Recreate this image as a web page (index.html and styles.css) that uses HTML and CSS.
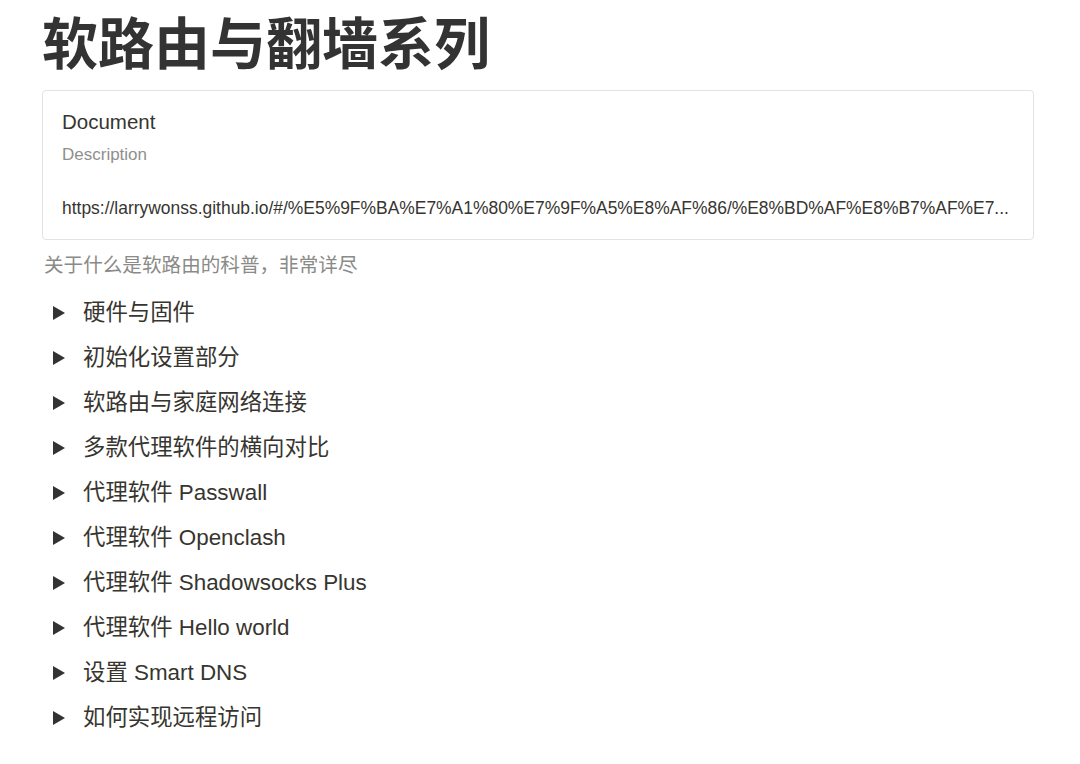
FILE: index.html
```html
<!DOCTYPE html>
<html lang="zh-CN">
<head>
<meta charset="utf-8">
<title>软路由与翻墙系列</title>
<link rel="stylesheet" href="styles.css">
</head>
<body>
<main class="page">
  <h1 class="title">软路由与翻墙系列</h1>
  <div class="bookmark">
    <div class="bm-title">Document</div>
    <div class="bm-desc">Description</div>
    <div class="bm-url">https://larrywonss.github.io/#/%E5%9F%BA%E7%A1%80%E7%9F%A5%E8%AF%86/%E8%BD%AF%E8%B7%AF%E7...</div>
  </div>
  <p class="caption">关于什么是软路由的科普，非常详尽</p>
  <ul class="toggles">
    <li class="toggle"><span class="tri"></span><span class="label">硬件与固件</span></li>
    <li class="toggle"><span class="tri"></span><span class="label">初始化设置部分</span></li>
    <li class="toggle"><span class="tri"></span><span class="label">软路由与家庭网络连接</span></li>
    <li class="toggle"><span class="tri"></span><span class="label">多款代理软件的横向对比</span></li>
    <li class="toggle"><span class="tri"></span><span class="label">代理软件 Passwall</span></li>
    <li class="toggle"><span class="tri"></span><span class="label">代理软件 Openclash</span></li>
    <li class="toggle"><span class="tri"></span><span class="label">代理软件 Shadowsocks Plus</span></li>
    <li class="toggle"><span class="tri"></span><span class="label">代理软件 Hello world</span></li>
    <li class="toggle"><span class="tri"></span><span class="label">设置 Smart DNS</span></li>
    <li class="toggle"><span class="tri"></span><span class="label">如何实现远程访问</span></li>
  </ul>
</main>
</body>
</html>
```

FILE: styles.css
```css
html, body {
  margin: 0;
  padding: 0;
  background: #ffffff;
}

body {
  font-family: "Liberation Sans", "Noto Sans CJK SC", sans-serif;
  color: #37352f;
}

.page {
  width: 992px;
  padding: 0 46px 0 42px;
}

.title {
  margin: 0;
  font-family: "Noto Sans CJK SC", sans-serif;
  font-weight: 700;
  font-size: 56px;
  line-height: 80px;
  color: #333333;
}

.bookmark {
  margin-top: 10px;
  border: 1px solid #e3e3e1;
  border-radius: 4px;
  padding: 19px 20px 19px 19px;
}

.bm-title {
  font-size: 20.5px;
  line-height: 24px;
  color: #37352f;
}

.bm-desc {
  margin-top: 9px;
  font-size: 17px;
  line-height: 24px;
  color: #8f8f8c;
}

.bm-url {
  margin-top: 29px;
  font-size: 17.45px;
  line-height: 24px;
  color: #37352f;
  white-space: nowrap;
}

.caption {
  margin: 10px 0 0 2px;
  font-family: "Noto Sans CJK SC", sans-serif;
  font-size: 19.6px;
  line-height: 28px;
  color: #8a8a87;
}

.toggles {
  list-style: none;
  margin: 12px 0 0 0;
  padding: 0;
}

.toggle {
  display: flex;
  align-items: center;
  height: 45px;
}

.tri {
  width: 0;
  height: 0;
  margin-left: 11px;
  border-top: 7px solid transparent;
  border-bottom: 7px solid transparent;
  border-left: 12px solid #333333;
}

.label {
  margin-left: 18px;
  font-size: 22.4px;
  line-height: 45px;
  color: #37352f;
}
```
